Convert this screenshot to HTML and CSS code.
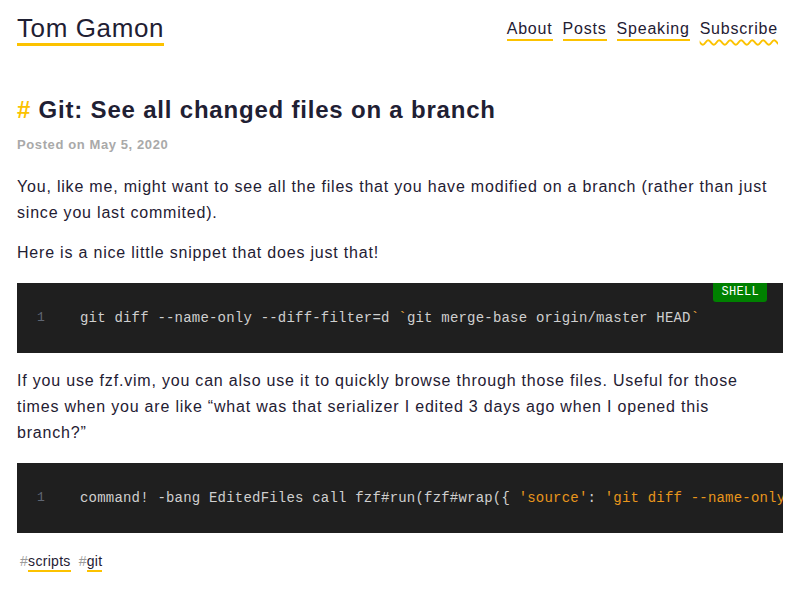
FILE: index.html
```html
<!DOCTYPE html>
<html lang="en">
<head>
<meta charset="utf-8">
<title>Git: See all changed files on a branch</title>
<link rel="stylesheet" href="styles.css">
</head>
<body>
<div class="page">
  <header class="site-header">
    <a class="brand" href="#">Tom Gamon</a>
    <nav class="nav">
      <a href="#">About</a>
      <a href="#">Posts</a>
      <a href="#">Speaking</a>
      <a href="#" class="wavy">Subscribe</a>
    </nav>
  </header>
  <main class="post">
    <h1 class="title"><span class="hash">#</span> Git: See all changed files on a branch</h1>
    <p class="meta">Posted on May 5, 2020</p>
    <p>You, like me, might want to see all the files that you have modified on a branch (rather than just since you last commited).</p>
    <p>Here is a nice little snippet that does just that!</p>
    <div class="code">
      <span class="lang">SHELL</span>
      <div class="line"><span class="ln">1</span><span class="src">git diff --name-only --diff-filter=d <span class="tick">`</span>git merge-base origin/master HEAD<span class="tick">`</span></span></div>
    </div>
    <p>If you use fzf.vim, you can also use it to quickly browse through those files. Useful for those times when you are like “what was that serializer I edited 3 days ago when I opened this branch?”</p>
    <div class="code">
      <div class="line"><span class="ln">1</span><span class="src">command! -bang EditedFiles call fzf#run(fzf#wrap({ <span class="str">'source'</span>: <span class="str">'git diff --name-only --diff-filter=d `git merge-base origin/master HEAD`'</span> }))</span></div>
    </div>
    <div class="tags">
      <a href="#" class="tag"><span class="th">#</span><span class="tn">scripts</span></a>
      <a href="#" class="tag"><span class="th">#</span><span class="tn">git</span></a>
    </div>
  </main>
</div>
</body>
</html>
```
FILE: styles.css
```css
html, body {
  margin: 0;
  padding: 0;
  background: #ffffff;
}
body {
  font-family: "Liberation Sans", Arial, sans-serif;
  color: #1f2033;
  font-size: 16px;
  letter-spacing: 0.8px;
}
a {
  color: inherit;
  text-decoration: none;
}
.page {
  padding: 0 17px;
}
.site-header {
  display: flex;
  justify-content: space-between;
  align-items: flex-start;
  padding-top: 13px;
}
.brand {
  font-size: 26px;
  line-height: 30px;
  letter-spacing: 0.6px;
  border-bottom: 3px solid #fcc200;
}
.nav {
  display: flex;
  gap: 10px;
  padding-top: 6px;
  margin-right: 5px;
}
.nav a {
  font-size: 16px;
  line-height: 20px;
  padding-bottom: 0;
  border-bottom: 2px solid #fcc200;
}
.nav a.wavy {
  border-bottom: 2px solid transparent;
  text-decoration: underline wavy #fcc200;
  text-decoration-thickness: 1.5px;
  text-underline-offset: 5px;
}
.post {
  padding-top: 49px;
}
.title {
  margin: 0;
  font-size: 24px;
  line-height: 30px;
  font-weight: bold;
  letter-spacing: 0.8px;
}
.hash {
  color: #fcc200;
}
.meta {
  margin: 7px 0 16px;
  font-size: 13px;
  font-weight: bold;
  color: #a9a9a9;
  letter-spacing: 0.6px;
}
p {
  margin: 0 0 14px;
  line-height: 26px;
}
.code {
  position: relative;
  background: #1f1f1f;
  height: 70px;
  display: flex;
  align-items: center;
  overflow: hidden;
  margin: 17px 0 15px;
  white-space: pre;
}
.code + p {
  margin-bottom: 16px;
}
.lang {
  position: absolute;
  top: 0;
  right: 16px;
  background: #008000;
  color: #ffffff;
  font-family: "Liberation Mono", "Courier New", monospace;
  font-size: 12px;
  line-height: 19px;
  padding: 0 8px;
  letter-spacing: 0.3px;
  border-radius: 0 0 3px 3px;
}
.line {
  display: flex;
  font-family: "Liberation Mono", "Courier New", monospace;
  font-size: 14px;
  letter-spacing: 0.2px;
  color: #cfcfcf;
}
.ln {
  width: 63px;
  padding-left: 20px;
  box-sizing: border-box;
  color: #5f6673;
  font-size: 13px;
  flex: none;
}
.tick {
  color: #e6a23c;
}
.str {
  color: #e8961c;
}
.tags {
  display: flex;
  gap: 8px;
  padding-left: 3px;
  margin-top: 20px;
  font-size: 14px;
  letter-spacing: 0.3px;
}
.tag {
  display: inline-flex;
}
.th {
  color: #9a9a9a;
}
.tn {
  border-bottom: 2px solid #fcc200;
  line-height: 17px;
}
```
